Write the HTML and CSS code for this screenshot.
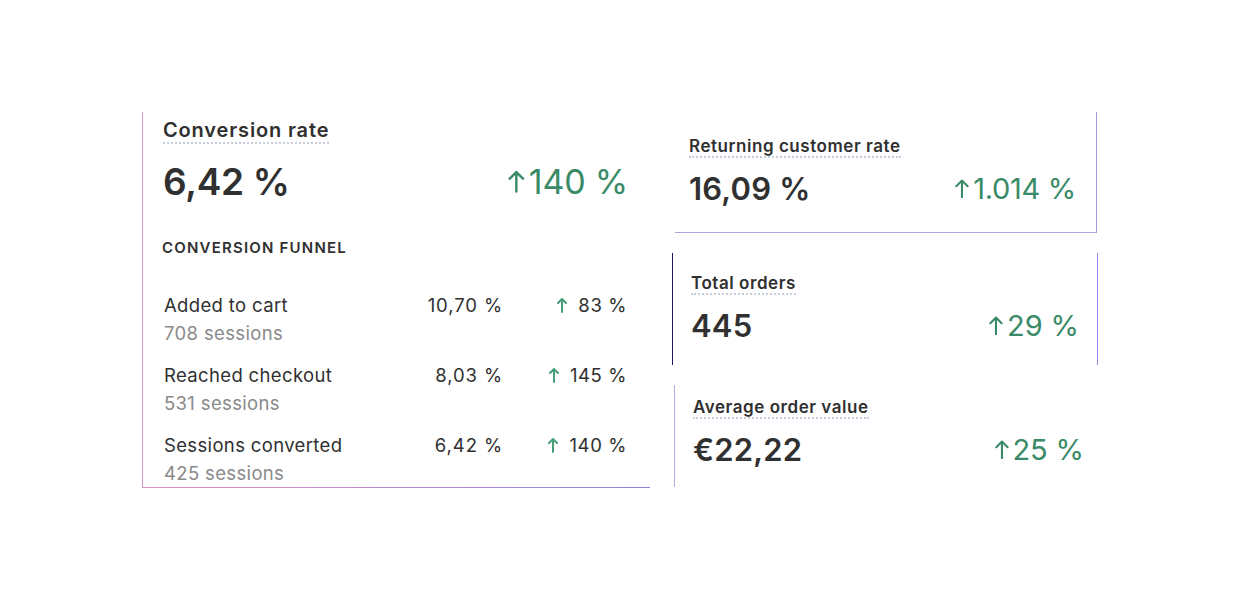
FILE: index.html
```html
<!DOCTYPE html>
<html lang="en">
<head>
<meta charset="utf-8">
<title>Analytics</title>
<link rel="stylesheet" href="styles.css">
</head>
<body>
<main class="page">
  <section class="card-main">
    <h2 class="metric-title metric-title--lg"><span>Conversion rate</span></h2>
    <div class="metric-row metric-row--lg">
      <span class="metric-value">6,42 %</span>
      <span class="delta"><svg class="arrow" viewBox="0 0 16 24"><path d="M8 22V3M1.5 9.5L8 3l6.5 6.5"/></svg>140 %</span>
    </div>
    <h3 class="funnel-title">CONVERSION FUNNEL</h3>
    <div class="funnel">
      <div class="funnel-row">
        <div class="funnel-label">Added to cart<span class="funnel-sub">708 sessions</span></div>
        <div class="funnel-val">10,70 %</div>
        <div class="funnel-delta"><svg class="arrow-sm" viewBox="0 0 10 16"><path d="M5 15V2M1 6l4-4 4 4"/></svg>83 %</div>
      </div>
      <div class="funnel-row">
        <div class="funnel-label">Reached checkout<span class="funnel-sub">531 sessions</span></div>
        <div class="funnel-val">8,03 %</div>
        <div class="funnel-delta"><svg class="arrow-sm" viewBox="0 0 10 16"><path d="M5 15V2M1 6l4-4 4 4"/></svg>145 %</div>
      </div>
      <div class="funnel-row">
        <div class="funnel-label">Sessions converted<span class="funnel-sub">425 sessions</span></div>
        <div class="funnel-val">6,42 %</div>
        <div class="funnel-delta"><svg class="arrow-sm" viewBox="0 0 10 16"><path d="M5 15V2M1 6l4-4 4 4"/></svg>140 %</div>
      </div>
    </div>
  </section>

  <div class="side">
    <section class="card-side card-returning">
      <h2 class="metric-title"><span>Returning customer rate</span></h2>
      <div class="metric-row">
        <span class="metric-value metric-value--sm">16,09 %</span>
        <span class="delta delta--sm"><svg class="arrow" viewBox="0 0 16 24"><path d="M8 22V3M1.5 9.5L8 3l6.5 6.5"/></svg>1.014 %</span>
      </div>
    </section>
    <section class="card-side card-orders">
      <h2 class="metric-title"><span>Total orders</span></h2>
      <div class="metric-row">
        <span class="metric-value metric-value--sm">445</span>
        <span class="delta delta--md"><svg class="arrow" viewBox="0 0 16 24"><path d="M8 22V3M1.5 9.5L8 3l6.5 6.5"/></svg>29 %</span>
      </div>
    </section>
    <section class="card-side card-aov">
      <h2 class="metric-title"><span>Average order value</span></h2>
      <div class="metric-row">
        <span class="metric-value metric-value--sm">€22,22</span>
        <span class="delta delta--md"><svg class="arrow" viewBox="0 0 16 24"><path d="M8 22V3M1.5 9.5L8 3l6.5 6.5"/></svg>25 %</span>
      </div>
    </section>
  </div>
</main>
</body>
</html>
```

FILE: styles.css
```css
* { box-sizing: border-box; }

html, body {
  margin: 0;
  padding: 0;
  background: #ffffff;
}

body {
  font-family: Inter, "Noto Sans", "Liberation Sans", sans-serif;
  color: #303030;
  width: 1240px;
  height: 600px;
  overflow: hidden;
}

.page {
  display: flex;
  align-items: flex-start;
  gap: 22px;
  padding: 112px 0 0 142px;
}

/* ---------- main card ---------- */
.card-main {
  width: 508px;
  height: 376px;
  padding: 6px 22px 0 20px;
  border-left: 1px solid #d99bc0;
  background: linear-gradient(to right, #e48fbd, #8a86dc) left bottom / 100% 1px no-repeat;
  overflow: hidden;
}

.metric-title {
  margin: 0;
  font-size: 17px;
  line-height: 22px;
  font-weight: 600;
  letter-spacing: 0.55px;
}

.metric-title span {
  display: inline-block;
  border-bottom: 2px dotted #c5cedb;
  line-height: 20px;
  padding-bottom: 0;
}

.metric-title--lg {
  font-size: 20px;
  line-height: 24px;
  letter-spacing: 0.85px;
}

.metric-title--lg span {
  line-height: 24px;
}

.metric-row {
  display: flex;
  align-items: center;
  justify-content: space-between;
  margin-top: 12px;
}

.metric-row--lg {
  margin-top: 16px;
}

.metric-value {
  font-size: 37px;
  line-height: 44px;
  font-weight: 600;
  letter-spacing: -0.3px;
}

.metric-value--sm {
  font-size: 31px;
  line-height: 38px;
  letter-spacing: 0.2px;
}

.delta {
  display: inline-flex;
  align-items: center;
  color: #3a8a68;
  font-size: 34px;
  line-height: 44px;
  font-weight: 400;
  letter-spacing: -0.2px;
}

.delta--sm {
  font-size: 29px;
  line-height: 38px;
  letter-spacing: -0.3px;
}

.delta--md {
  font-size: 29px;
  line-height: 38px;
  letter-spacing: -0.1px;
}

.arrow {
  width: 0.55em;
  height: 0.72em;
  margin-right: 3px;
  margin-top: -2px;
  fill: none;
  stroke: #3a8a68;
  stroke-width: 2.4;
  stroke-linecap: round;
  stroke-linejoin: round;
}

.funnel-title {
  margin: 34px 0 0 -1px;
  font-size: 15px;
  line-height: 20px;
  font-weight: 600;
  letter-spacing: 1.2px;
}

.funnel {
  display: flex;
  flex-direction: column;
  gap: 14px;
  margin-top: 33px;
}

.funnel-row {
  display: grid;
  grid-template-columns: 1fr 123px 125px;
  font-size: 18.5px;
  line-height: 28px;
  padding-left: 1px;
  letter-spacing: 0.35px;
}

.funnel-label {
  display: flex;
  flex-direction: column;
}

.funnel-sub {
  color: #8a8a8a;
}

.funnel-val {
  text-align: right;
  letter-spacing: 0.9px;
}

.funnel-delta {
  display: flex;
  justify-content: flex-end;
  align-items: flex-start;
  letter-spacing: 0.6px;
  padding-right: 1px;
}

.arrow-sm {
  width: 10px;
  height: 16px;
  margin: 6px 11px 0 0;
  fill: none;
  stroke: #45a07a;
  stroke-width: 2;
  stroke-linecap: round;
  stroke-linejoin: round;
}

/* ---------- side cards ---------- */
.side {
  display: flex;
  flex-direction: column;
  gap: 20px;
}

.card-side {
  display: flex;
  flex-direction: column;
}

.card-returning {
  margin-left: 3px;
  width: 422px;
  height: 121px;
  padding: 23px 20px 0 14px;
  border-right: 1px solid #9c98e4;
  border-bottom: 1px solid #aaa6e0;
}

.card-orders {
  width: 426px;
  height: 112px;
  padding: 19px 18px 0 18px;
  border-left: 1px solid #1c1a6a;
  border-right: 1px solid #8a86f2;
}

.card-aov {
  margin-left: 2px;
  width: 424px;
  height: 102px;
  padding: 11px 14px 0 18px;
  border-left: 1px solid #b4aee4;
}
```
